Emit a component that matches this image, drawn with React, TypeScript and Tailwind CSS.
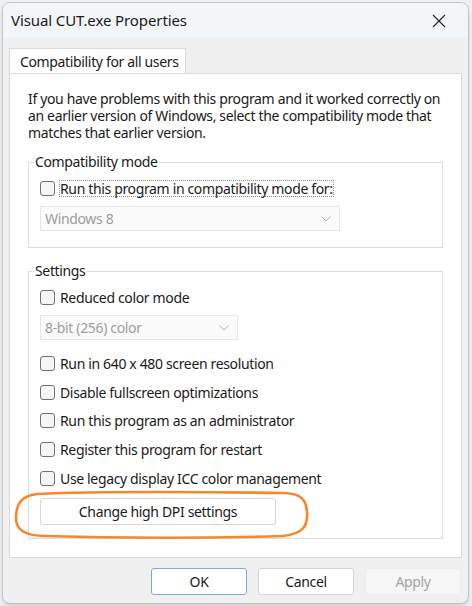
import React from 'react'

const font = { fontFamily: '"Noto Sans", "Open Sans", sans-serif' }

function Checkbox({ label, focused }: { label: string; focused?: boolean }) {
  return (
    <div className="flex h-[20px] items-center">
      <span className="h-[15px] w-[15px] shrink-0 rounded-[3px] border border-[#707070] bg-[#f6f6f6]" />
      <span
        className={
          focused
            ? 'ml-[4px] whitespace-nowrap border border-dotted border-[#8a8a8a] leading-[15px]'
            : 'ml-[5px] whitespace-nowrap leading-[15px]'
        }
      >
        {label}
      </span>
    </div>
  )
}

function Select({ value, width }: { value: string; width: string }) {
  return (
    <div
      className={`flex h-[25px] items-center justify-between border border-[#e6e6e6] bg-[#fbfbfb] pl-[4px] pr-[8px] text-[#9c9c9c] ${width}`}
    >
      <span>{value}</span>
      <svg width="10" height="6" viewBox="0 0 10 6" fill="none">
        <path d="M0.5 0.5 L5 5 L9.5 0.5" stroke="#b0b0b0" strokeWidth="1" />
      </svg>
    </div>
  )
}

export default function App() {
  return (
    <div className="h-[606px] w-[472px] overflow-hidden bg-[#eef1f4] pl-[2px] pt-[2px]" style={font}>
      <div className="flex h-[602px] w-[467px] flex-col overflow-hidden rounded-[8px] border border-[#c4c4c4] bg-[#f0f0f0] text-[14px] tracking-[-0.35px] text-[#1a1a1a] shadow-md">
        <div className="flex h-[35px] shrink-0 items-center justify-between bg-[#f3f6f9] pl-[8px] pr-[22px]">
          <span className="text-[15px] tracking-[-0.1px] text-[#1b1b1b]">Visual CUT.exe Properties</span>
          <svg width="14" height="14" viewBox="0 0 14 14" fill="none">
            <path d="M1 1 L13 13 M13 1 L1 13" stroke="#222" strokeWidth="1.1" />
          </svg>
        </div>

        <div className="relative flex flex-1 flex-col px-[6px] pt-[10px]">
          <div className="flex">
            <div className="-mb-px flex h-[26px] w-[177px] items-center whitespace-nowrap border border-b-0 border-[#dadada] bg-white pl-[10px]">
              Compatibility for all users
            </div>
          </div>
          <div className="h-[485px] border border-[#dadada] bg-white px-[18px] pt-[16px]">
            <p className="leading-[17px]">
              If you have problems with this program and it worked correctly on an earlier version of Windows,
              select the compatibility mode that matches that earlier version.
            </p>

            <fieldset className="mt-[12px] border border-[#dcdcdc] px-[11px] pb-[16px]">
              <legend className="ml-[-6px] px-[1px] leading-[18px]">Compatibility mode</legend>
              <div className="mt-[7px]">
                <Checkbox label="Run this program in compatibility mode for:" focused />
              </div>
              <div className="mt-[8px]">
                <Select value="Windows 8" width="w-[300px]" />
              </div>
            </fieldset>

            <fieldset className="mt-[14px] border border-[#dcdcdc] px-[11px] pb-[13px]">
              <legend className="ml-[-6px] px-[1px] leading-[18px]">Settings</legend>
              <div className="mt-[7px]">
                <Checkbox label="Reduced color mode" />
              </div>
              <div className="mt-[8px]">
                <Select value="8-bit (256) color" width="w-[198px]" />
              </div>
              <div className="mt-[13px]">
                <Checkbox label="Run in 640 x 480 screen resolution" />
              </div>
              <div className="mt-[9px]">
                <Checkbox label="Disable fullscreen optimizations" />
              </div>
              <div className="mt-[8px]">
                <Checkbox label="Run this program as an administrator" />
              </div>
              <div className="mt-[9px]">
                <Checkbox label="Register this program for restart" />
              </div>
              <div className="mt-[9px]">
                <Checkbox label="Use legacy display ICC color management" />
              </div>
              <button className="mt-[10px] flex h-[27px] w-[236px] items-center justify-center rounded-[3px] border border-[#d6d6d6] bg-white">
                Change high DPI settings
              </button>
            </fieldset>
          </div>

          <div className="flex justify-end gap-[11px] pr-[1px] pt-[10px]">
            <button className="h-[27px] w-[96px] rounded-[3px] border border-[#7fa9d8] bg-white">OK</button>
            <button className="h-[27px] w-[96px] rounded-[3px] border border-[#d3d3d3] bg-white">Cancel</button>
            <button className="h-[27px] w-[96px] rounded-[3px] border border-[#ececec] bg-[#f6f6f6] text-[#a3a3a3]">
              Apply
            </button>
          </div>

          <svg
            className="pointer-events-none absolute left-[10px] top-[452px]"
            width="298"
            height="50"
            viewBox="0 0 298 50"
            fill="none"
          >
            <path
              d="M24 4 C 90 1, 200 2, 272 3 C 289 4, 293 10, 294 22 C 295 36, 290 44, 270 46 C 200 48, 100 48, 30 46 C 10 45, 3 39, 3 28 C 3 14, 8 6, 24 4 Z"
              stroke="#f7862c"
              strokeWidth="2.6"
            />
          </svg>
        </div>
      </div>
    </div>
  )
}
